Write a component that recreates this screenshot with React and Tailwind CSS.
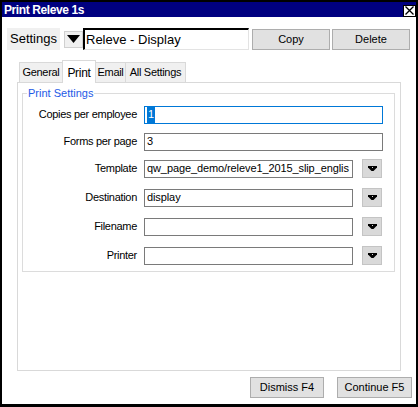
import React from "react";

// --- Small pieces ---

const SmallDrop = () => (
  <button className="w-[20px] h-[19px] flex items-center justify-center bg-[#d9d9d9] border border-[#c4c4c4]">
    <svg width="9" height="6" viewBox="0 0 9 6">
      <path d="M0 0h9v1.5L5.5 5h-2L0 1.5z" fill="#000" />
      <rect x="4" y="1" width="1" height="1" fill="#d9d9d9" />
    </svg>
  </button>
);

const Field = ({ label, value, focused, drop }) => (
  <div className="flex items-center h-[19px]">
    <div className="w-[114px] text-right text-[11px] tracking-[-0.3px] text-black">{label}</div>
    <div
      className={`ml-[7px] h-[18px] flex items-center px-[2px] bg-white border ${
        focused ? "border-[#0078d7]" : "border-[#7a7a7a]"
      } ${drop ? "w-[209px]" : "w-[239px]"} overflow-hidden whitespace-nowrap text-[11px] tracking-[-0.1px]`}
    >
      {focused ? <span className="bg-[#0078d7] text-white px-[1px]">{value}</span> : value}
    </div>
    {drop && (
      <div className="ml-[9px]">
        <SmallDrop />
      </div>
    )}
  </div>
);

const Btn = ({ children, w }) => (
  <button
    className={`${w} h-[21px] bg-[#e1e1e1] border border-[#adadad] text-[11px] text-black flex items-center justify-center`}
  >
    {children}
  </button>
);

// --- Window ---

export default function App() {
  const tabs = ["General", "Print", "Email", "All Settings"];
  const tabW = { General: "w-[44px]", Print: "w-[34px]", Email: "w-[31px]", "All Settings": "w-[61px]" };

  return (
    <div
      className="w-[418px] h-[407px] bg-black pt-[2px] pl-[2px] pr-[2px] pb-[3px]"
      style={{ fontFamily: '"Liberation Sans", Arial, sans-serif' }}
    >
      <div className="w-full h-full bg-white flex flex-col">
        {/* Title bar */}
        <div className="h-[15px] bg-[#000080] flex items-center justify-between pl-[2px] pr-0">
          <span className="text-white font-bold text-[12px] tracking-[-0.4px] leading-none">Print Releve 1s</span>
          <div className="w-[13px] h-[12px] bg-white border border-black flex items-center justify-center mt-[2px]">
            <svg width="9" height="9" viewBox="0 0 9 9">
              <path d="M0.5 0.5L8.5 8.5M8.5 0.5L0.5 8.5" stroke="#000" strokeWidth="1.3" />
            </svg>
          </div>
        </div>

        {/* Settings row */}
        <div className="flex items-center mt-[11px] ml-[5px] h-[22px]">
          <div className="w-[53px] h-[22px] bg-[#f0f0f0] flex items-center pl-[3px] text-[13px] text-black">
            Settings
          </div>
          <button className="ml-[4px] w-[19px] h-[17px] bg-[#f0f0f0] border border-[#d0d0d0] flex items-center justify-center">
            <svg width="13" height="8" viewBox="0 0 13 8">
              <path d="M0 0h13L6.5 8z" fill="#000" />
            </svg>
          </button>
          <div className="w-[166px] h-[22px] border-t-2 border-l-2 border-black border-r border-b border-r-[#e3e3e3] border-b-[#e3e3e3] flex items-center pl-[1px] text-[13px] text-black">
            Releve - Display
          </div>
          <div className="ml-[3px] flex gap-[2px]">
            <Btn w="w-[78px]">Copy</Btn>
            <Btn w="w-[78px]">Delete</Btn>
          </div>
        </div>

        {/* Tabs */}
        <div className="ml-[15px] mt-[10px] w-[384px] flex flex-col">
          <div className="flex items-end pl-[2px] h-[23px] -mb-px relative z-10">
            {tabs.map((t) =>
              t === "Print" ? (
                <div
                  key={t}
                  className={`${tabW[t]} h-[23px] -ml-px bg-white border border-b-0 border-[#d9d9d9] text-[12px] tracking-[-0.3px] flex justify-center pt-[3px]`}
                >
                  {t}
                </div>
              ) : (
                <div
                  key={t}
                  className={`${tabW[t]} h-[21px] bg-[#f0f0f0] border border-[#d9d9d9] -ml-px first:ml-0 text-[11px] tracking-[-0.3px] flex items-center justify-center`}
                >
                  {t}
                </div>
              )
            )}
          </div>

          {/* Panel */}
          <div className="h-[289px] bg-white border border-[#d9d9d9] px-[4px] pt-[4px]">
            <fieldset className="border border-[#dcdcdc] w-[373px] pb-[6px]">
              <legend className="ml-[4px] px-[1px] text-[11px] leading-[12px] text-[#1e5ae6]">Print Settings</legend>
              <div className="flex flex-col mt-[6px]">
                <Field label="Copies per employee" value="1" focused />
                <div className="mt-[8px]">
                  <Field label="Forms per page" value="3" />
                </div>
                <div className="mt-[8px]">
                  <Field label="Template" value="qw_page_demo/releve1_2015_slip_englis" drop />
                </div>
                <div className="mt-[10px]">
                  <Field label="Destination" value="display" drop />
                </div>
                <div className="mt-[10px]">
                  <Field label="Filename" value="" drop />
                </div>
                <div className="mt-[10px]">
                  <Field label="Printer" value="" drop />
                </div>
              </div>
            </fieldset>
          </div>
        </div>

        {/* Bottom buttons */}
        <div className="flex justify-end mt-[6px] mr-[4px] gap-[13px]">
          <Btn w="w-[74px]">Dismiss F4</Btn>
          <Btn w="w-[75px]">Continue F5</Btn>
        </div>
      </div>
    </div>
  );
}
